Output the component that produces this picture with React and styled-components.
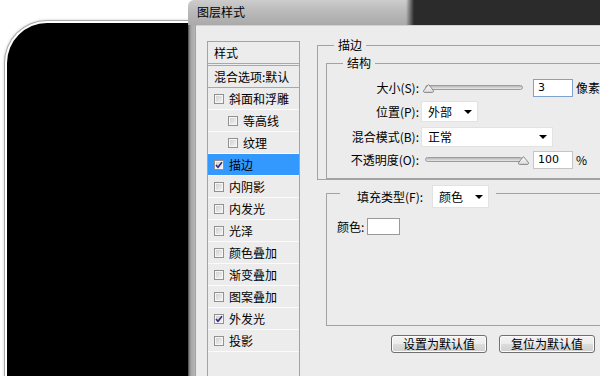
import styled, { createGlobalStyle } from 'styled-components';

const GlobalStyle = createGlobalStyle`
  html, body {
    margin: 0;
    padding: 0;
    background: #fff;
  }
  body {
    font-family: "Noto Sans CJK SC", "Noto Sans", "DejaVu Sans", sans-serif;
    font-size: 12px;
    color: #000;
  }
`;

const Page = styled.div`
  width: 600px;
  height: 376px;
  overflow: hidden;
  display: flex;
  background: #fff;
`;

const Canvas = styled.div`
  width: 188px;
  flex-shrink: 0;
  box-sizing: border-box;
  padding: 21px 0 0 5px;
  display: flex;
`;

const Shape = styled.div`
  flex: 1;
  background: #000;
  border: 2px solid #fff;
  border-right: none;
  border-bottom: none;
  border-top-left-radius: 42px;
  box-shadow: 0 0 0 1px #a9a9a9, 0 0 3px 1px rgba(0, 0, 0, 0.2);
`;

const Dialog = styled.div`
  flex: 1;
  min-width: 0;
  display: flex;
  flex-direction: column;
`;

const TitleBar = styled.div`
  height: 25px;
  display: flex;
  flex-shrink: 0;
`;

const TitleCap = styled.div`
  width: 226px;
  flex-shrink: 0;
  box-sizing: border-box;
  padding-left: 9px;
  border-top-left-radius: 6px;
  background:
    linear-gradient(to right, rgba(43, 43, 43, 0) 0, rgba(43, 43, 43, 0) 218px, #2b2b2b 226px),
    linear-gradient(#cdcdcd 0, #bcbcbc 40%, #aaaaaa 100%);
  font-size: 12px;
  line-height: 24px;
`;

const DarkFill = styled.div`
  flex: 1;
  background: #2b2b2b;
`;

const BodyRow = styled.div`
  flex: 1;
  display: flex;
  min-height: 0;
`;

const Frame = styled.div`
  width: 8px;
  flex-shrink: 0;
  background: linear-gradient(to right, #3a3a3a 0, #7a7a7a 1px, #a6a6a6 3px, #b6b6b6 7px, #8e8e8e 8px);
`;

const Inner = styled.div`
  flex: 1;
  min-width: 0;
  display: flex;
  align-items: flex-start;
  background: #ececec;
  border-top: 1px solid #d2d2d2;
  overflow: hidden;
`;

const Sidebar = styled.div`
  width: 93px;
  height: 345px;
  flex-shrink: 0;
  margin: 15px 0 0 11px;
  box-sizing: border-box;
  border: 1px solid #a3a3a3;
  background: #ececec;
`;

const SideHeader = styled.div`
  height: 21px;
  line-height: 21px;
  padding-left: 6px;
  border-bottom: 3px double #a8a8a8;
`;

const SideRow = styled.div`
  height: 21px;
  display: flex;
  align-items: center;
  gap: 5px;
  padding-left: ${(p) => (p.$sub ? 20 : 6)}px;
  border-bottom: 1px solid ${(p) => (p.$dark ? '#a8a8a8' : '#fbfbfb')};
  background: ${(p) => (p.$active ? '#3399ff' : 'transparent')};
  line-height: 21px;
  white-space: nowrap;
`;

const Check = styled.span`
  width: 10px;
  height: 10px;
  flex-shrink: 0;
  box-sizing: border-box;
  border: 1px solid #919191;
  background: linear-gradient(135deg, #cdcdcd, #f6f6f6);
  box-shadow: inset 0 0 0 1px #f6f6f6;
  display: flex;
  align-items: center;
  justify-content: center;
`;

const Content = styled.div`
  flex: 1;
  min-width: 0;
  margin: 11px 0 0 17px;
  display: flex;
  flex-direction: column;
`;

const Group = styled.fieldset`
  margin: ${(p) => p.$margin || '0'};
  padding: ${(p) => p.$pad || '0'};
  border: 1px solid #a2a2a2;
  border-right: none;
  min-width: 0;
`;

const Legend = styled.legend`
  margin-left: ${(p) => p.$ml}px;
  padding: 0 4px;
  line-height: 16px;
  font-size: 12px;
`;

const FillLegend = styled.legend`
  margin-left: 13px;
  padding: 0 7px 0 17px;
  height: 16px;
  display: flex;
  align-items: flex-start;
  gap: 9px;
`;

const LegendText = styled.span`
  line-height: 23px;
`;

const FormRow = styled.div`
  display: flex;
  align-items: center;
  height: ${(p) => p.$h}px;
  margin-top: ${(p) => p.$mt}px;
`;

const Label = styled.span`
  width: 92px;
  flex-shrink: 0;
  text-align: right;
  line-height: 16px;
  white-space: nowrap;
`;

const SliderWrap = styled.div`
  position: relative;
  width: 98px;
  height: 18px;
  margin-left: 6px;
  flex-shrink: 0;
`;

const Track = styled.div`
  position: absolute;
  left: 0;
  right: 0;
  top: 6px;
  height: 5px;
  box-sizing: border-box;
  border: 1px solid #9c9c9c;
  border-radius: 3px;
  background: linear-gradient(#b9b9b9, #e6e6e6);
`;

const Thumb = styled.svg`
  position: absolute;
  top: 5px;
  left: ${(p) => p.$pos}px;
`;

const NumBox = styled.div`
  width: 40px;
  height: 18px;
  margin-left: 10px;
  box-sizing: border-box;
  border: 1px solid ${(p) => (p.$focus ? '#7da2ce' : '#c5c5c5')};
  background: #fff;
  padding-left: 4px;
  font-family: "DejaVu Sans", "Liberation Sans", sans-serif;
  font-size: 11px;
  line-height: 16px;
  flex-shrink: 0;
`;

const Unit = styled.span`
  margin-left: 3px;
  line-height: 16px;
  white-space: nowrap;
`;

const Select = styled.div`
  width: ${(p) => p.$w}px;
  height: ${(p) => p.$h}px;
  margin-left: ${(p) => p.$ml || 0}px;
  box-sizing: border-box;
  flex-shrink: 0;
  background: #fff;
  border: 1px solid #e2e2e2;
  display: flex;
  align-items: center;
  justify-content: space-between;
  padding: 0 5px 0 6px;
  line-height: 16px;
`;

const Arrow = styled.span`
  width: 0;
  height: 0;
  border-left: 4px solid transparent;
  border-right: 4px solid transparent;
  border-top: 4px solid #000;
`;

const FillBody = styled.div`
  height: 124px;
  box-sizing: border-box;
  padding: 17px 0 0 10px;
  display: flex;
  align-items: flex-start;
  gap: 3px;
`;

const ColorLabel = styled.span`
  line-height: 17px;
`;

const Swatch = styled.div`
  width: 33px;
  height: 17px;
  box-sizing: border-box;
  border: 1px solid #9a9a9a;
  background: #fff;
`;

const ButtonRow = styled.div`
  display: flex;
  justify-content: flex-end;
  gap: 12px;
  padding-right: 5px;
  margin-top: 9px;
`;

const Button = styled.div`
  width: 96px;
  height: 18px;
  box-sizing: border-box;
  border: 1px solid #707070;
  border-radius: 3px;
  background: linear-gradient(#f3f3f3 0%, #ebebeb 50%, #dddddd 51%, #cfcfcf 100%);
  box-shadow: inset 0 0 0 1px #fbfbfb;
  text-align: center;
  line-height: 16px;
  font-size: 12px;
`;

const effects = [
  { label: '斜面和浮雕' },
  { label: '等高线', sub: true },
  { label: '纹理', sub: true },
  { label: '描边', checked: true, active: true },
  { label: '内阴影' },
  { label: '内发光' },
  { label: '光泽' },
  { label: '颜色叠加' },
  { label: '渐变叠加' },
  { label: '图案叠加' },
  { label: '外发光', checked: true },
  { label: '投影' },
];

const CheckBox = ({ checked }) => (
  <Check>
    {checked && (
      <svg width="8" height="8" viewBox="0 0 8 8">
        <path d="M1 4 L3 6.2 L7 1.2" fill="none" stroke="#2a2a8a" strokeWidth="1.6" />
      </svg>
    )}
  </Check>
);

const Slider = ({ pos }) => (
  <SliderWrap>
    <Track />
    <Thumb $pos={pos} width="11" height="9" viewBox="0 0 11 9">
      <defs>
        <linearGradient id="thumbFill" x1="0" y1="0" x2="0" y2="1">
          <stop offset="0" stopColor="#ffffff" />
          <stop offset="1" stopColor="#d9d9d9" />
        </linearGradient>
      </defs>
      <path
        d="M5.5 0.6 C7 2.5 9 4.6 10.3 6.4 C10.9 7.4 10.4 8.4 9.2 8.4 L1.8 8.4 C0.6 8.4 0.1 7.4 0.7 6.4 C2 4.6 4 2.5 5.5 0.6 Z"
        fill="url(#thumbFill)"
        stroke="#7c7c7c"
        strokeWidth="0.9"
      />
    </Thumb>
  </SliderWrap>
);

export default function App() {
  return (
    <>
      <GlobalStyle />
      <Page>
        <Canvas>
          <Shape />
        </Canvas>
        <Dialog>
          <TitleBar>
            <TitleCap>图层样式</TitleCap>
            <DarkFill />
          </TitleBar>
          <BodyRow>
            <Frame />
            <Inner>
              <Sidebar>
                <SideHeader>样式</SideHeader>
                <SideRow $dark>混合选项:默认</SideRow>
                {effects.map((item) => (
                  <SideRow key={item.label} $sub={item.sub} $active={item.active}>
                    <CheckBox checked={item.checked} />
                    {item.label}
                  </SideRow>
                ))}
              </Sidebar>
              <Content>
                <Group $pad="0 0 0 8px">
                  <Legend $ml={8}>描边</Legend>
                  <Group $margin="2px 0 0 0" $pad="0 0 9px 0">
                    <Legend $ml={16}>结构</Legend>
                    <FormRow $h={18} $mt={8}>
                      <Label>大小(S):</Label>
                      <Slider pos={-2} />
                      <NumBox $focus>3</NumBox>
                      <Unit>像素</Unit>
                    </FormRow>
                    <FormRow $h={21} $mt={4}>
                      <Label>位置(P):</Label>
                      <Select $w={57} $h={21} $ml={2}>
                        外部
                        <Arrow />
                      </Select>
                    </FormRow>
                    <FormRow $h={20} $mt={5}>
                      <Label>混合模式(B):</Label>
                      <Select $w={132} $h={20} $ml={2}>
                        正常
                        <Arrow />
                      </Select>
                    </FormRow>
                    <FormRow $h={18} $mt={4}>
                      <Label>不透明度(O):</Label>
                      <Slider pos={93} />
                      <NumBox>100</NumBox>
                      <Unit>%</Unit>
                    </FormRow>
                  </Group>
                </Group>
                <Group $margin="5px 0 0 9px">
                  <FillLegend>
                    <LegendText>填充类型(F):</LegendText>
                    <Select $w={57} $h={23}>
                      颜色
                      <Arrow />
                    </Select>
                  </FillLegend>
                  <FillBody>
                    <ColorLabel>颜色:</ColorLabel>
                    <Swatch />
                  </FillBody>
                </Group>
                <ButtonRow>
                  <Button>设置为默认值</Button>
                  <Button>复位为默认值</Button>
                </ButtonRow>
              </Content>
            </Inner>
          </BodyRow>
        </Dialog>
      </Page>
    </>
  );
}
